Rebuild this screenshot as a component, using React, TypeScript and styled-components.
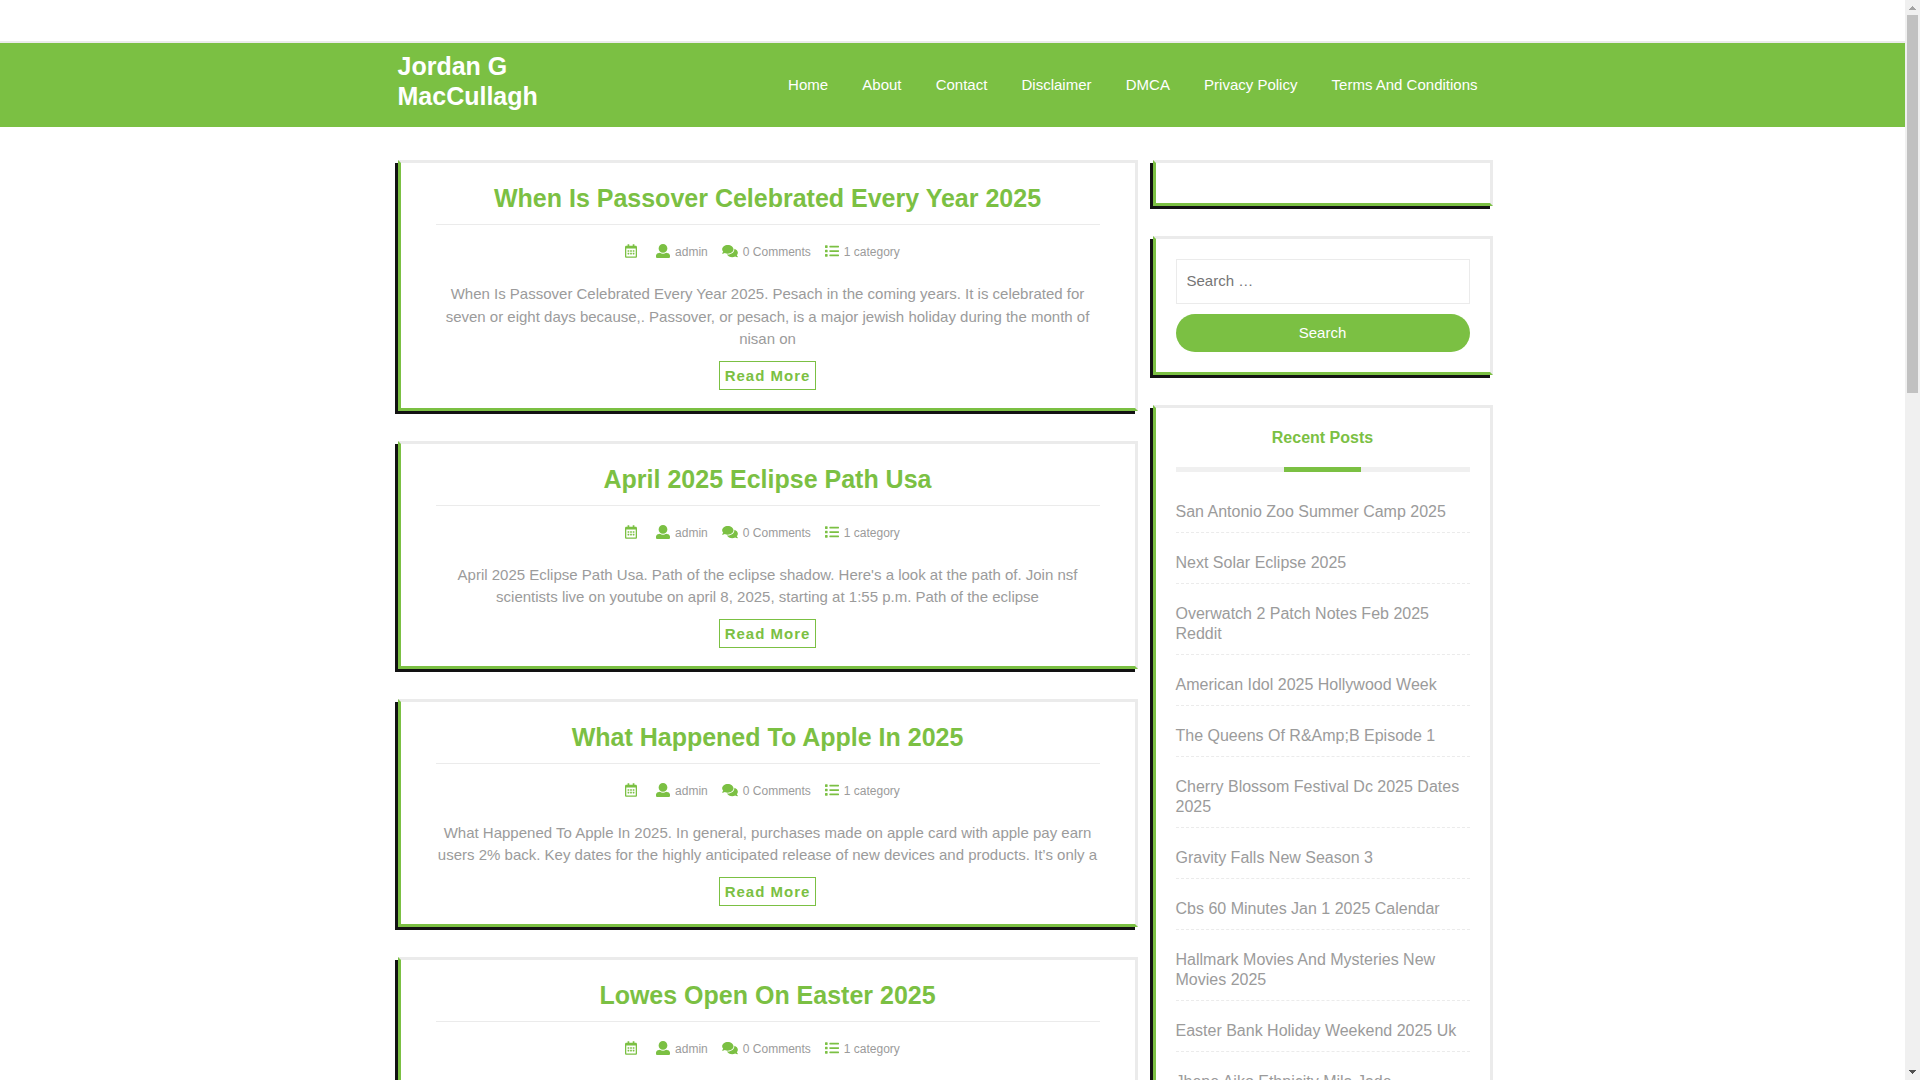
import React from "react";
import styled, { createGlobalStyle } from "styled-components";
import { FaComments, FaList, FaRegCalendarAlt } from "react-icons/fa";

const green = "#7bc043";
const line = "#ebebeb";
const grey = "#9b9b9b";

const GlobalStyle = createGlobalStyle`
  *, *::before, *::after { box-sizing: border-box; }
  body {
    margin: 0;
    background: #fff;
    color: ${grey};
    font-family: "Liberation Sans", Arial, sans-serif;
    font-size: 15px;
    line-height: 1.5;
  }
  a { color: inherit; text-decoration: none; }
  h1, h2, h3, p, ul { margin: 0; padding: 0; }
  ul { list-style: none; }
`;

const Window = styled.div`
  display: flex;
  height: 100vh;
  overflow: hidden;
`;

const Page = styled.div`
  flex: 1;
  min-width: 0;
  overflow-y: auto;
  scrollbar-width: none;
`;

const ScrollTrack = styled.div`
  display: flex;
  flex-direction: column;
  align-items: center;
  width: 15px;
  background: #f0f0f0;
`;

const ScrollArrow = styled.svg`
  flex: none;
  width: 15px;
  height: 15px;
  shape-rendering: crispEdges;
`;

const ScrollRail = styled.div`
  flex: 1;
  width: 11px;
`;

const ScrollThumb = styled.div`
  height: 36%;
  background: #c1c1c1;
`;

const TopBar = styled.div`
  height: 43px;
  border-bottom: 2px solid ${line};
`;

const Header = styled.header`
  background: ${green};
  color: #fff;
`;

const Container = styled.div`
  max-width: 1140px;
  margin: 0 auto;
  padding: 0 30px 0 15px;
`;

const HeaderRow = styled(Container)`
  display: flex;
  justify-content: space-between;
  align-items: center;
  padding-top: 8px;
  padding-bottom: 16px;
`;

const SiteTitle = styled.h1`
  width: 160px;
  font-size: 25px;
  line-height: 30px;
`;

const Menu = styled.ul`
  text-align: right;
`;

const MenuItem = styled.li`
  display: inline-block;
`;

const MenuLink = styled.a`
  display: block;
  padding: 8px 15px 0;
`;

const Columns = styled(Container)`
  display: grid;
  grid-template-columns: minmax(0, 1fr) 340px;
  column-gap: 15px;
  align-items: start;
  padding-top: 33px;
`;

const Stack = styled.div`
  display: grid;
  row-gap: 30px;
`;

const Box = styled.section`
  padding: 20px;
  border: 3px solid ${line};
  border-left-color: ${green};
  border-bottom-color: ${green};
  box-shadow: -3px 3px #121212;
`;

const PostBox = styled(Box)`
  padding: 20px 35px 18px;
  text-align: center;
`;

const PostTitle = styled.h2`
  padding-bottom: 11px;
  border-bottom: 1px solid ${line};
  color: ${green};
  font-size: 25px;
  line-height: 30px;
`;

const Meta = styled.div`
  display: flex;
  justify-content: center;
  gap: 4px;
  padding: 18px 0 22px;
  font-size: 12px;
  line-height: 18px;
`;

const MetaItem = styled.span<{ $icon: number }>`
  display: flex;
  align-items: center;
  gap: 5px;
  margin-right: 10px;

  svg {
    flex: none;
    width: ${(p) => p.$icon}px;
    height: 14px;
    margin-bottom: 2px;
    fill: ${green};
  }
`;

const ReadMore = styled.a`
  display: inline-block;
  margin-top: 10px;
  padding: 5px;
  border: 1px solid ${green};
  color: ${green};
  font-weight: bold;
  letter-spacing: 1px;
  line-height: 17px;
  vertical-align: top;
`;

const SearchForm = styled.form`
  display: grid;
  row-gap: 10px;
`;

const SearchInput = styled.input`
  width: 100%;
  height: 45px;
  padding: 0 10px 2px;
  border: 1px solid ${line};
  background: #fff;
  font: inherit;

  &::placeholder { color: #757575; }
`;

const SearchButton = styled.button`
  height: 38px;
  border: 0;
  border-radius: 20px;
  background: ${green};
  color: #fff;
  font: inherit;
`;

const WidgetTitle = styled.h3`
  margin-bottom: 30px;
  color: ${green};
  font-size: 16px;
  line-height: 19px;
  text-align: center;

  &::after {
    content: "";
    display: block;
    height: 5px;
    margin-top: 20px;
    background: linear-gradient(${green}, ${green}) center / 77px 5px no-repeat #f0f0f0;
  }
`;

const RecentList = styled.ul`
  display: grid;
  row-gap: 20px;
  font-size: 16px;
  line-height: 20px;
`;

const RecentItem = styled.li`
  padding-bottom: 10px;
  border-bottom: 1px dashed ${line};
`;

const menu = ["Home", "About", "Contact", "Disclaimer", "DMCA", "Privacy Policy", "Terms And Conditions"];

const posts: { title: string; excerpt?: string }[] = [
  {
    title: "When Is Passover Celebrated Every Year 2025",
    excerpt:
      "When Is Passover Celebrated Every Year 2025. Pesach in the coming years. It is celebrated for seven or eight days because,. Passover, or pesach, is a major jewish holiday during the month of nisan on",
  },
  {
    title: "April 2025 Eclipse Path Usa",
    excerpt:
      "April 2025 Eclipse Path Usa. Path of the eclipse shadow. Here's a look at the path of. Join nsf scientists live on youtube on april 8, 2025, starting at 1:55 p.m. Path of the eclipse",
  },
  {
    title: "What Happened To Apple In 2025",
    excerpt:
      "What Happened To Apple In 2025. In general, purchases made on apple card with apple pay earn users 2% back. Key dates for the highly anticipated release of new devices and products. It’s only a",
  },
  { title: "Lowes Open On Easter 2025" },
];

const recent = [
  "San Antonio Zoo Summer Camp 2025",
  "Next Solar Eclipse 2025",
  "Overwatch 2 Patch Notes Feb 2025 Reddit",
  "American Idol 2025 Hollywood Week",
  "The Queens Of R&Amp;B Episode 1",
  "Cherry Blossom Festival Dc 2025 Dates 2025",
  "Gravity Falls New Season 3",
  "Cbs 60 Minutes Jan 1 2025 Calendar",
  "Hallmark Movies And Mysteries New Movies 2025",
  "Easter Bank Holiday Weekend 2025 Uk",
  "Jhene Aiko Ethnicity Mila Jade",
];

const UserIcon = () => (
  <svg viewBox="0 0 512 512" aria-hidden="true">
    <path d="M256 0c88.366 0 160 71.634 160 160s-71.634 160-160 160S96 248.366 96 160 167.634 0 256 0zm183.283 333.821l-71.313-17.828c-74.923 53.89-165.738 41.864-223.94 0l-71.313 17.828C29.981 344.505 0 382.903 0 426.955V464c0 26.51 21.49 48 48 48h416c26.51 0 48-21.49 48-48v-37.045c0-44.052-29.981-82.45-72.717-93.134z" />
  </svg>
);

function Post({ title, excerpt }: { title: string; excerpt?: string }) {
  return (
    <PostBox as="article">
      <PostTitle>
        <a href="#post">{title}</a>
      </PostTitle>
      <Meta>
        <MetaItem $icon={12}>
          <FaRegCalendarAlt />
          <span />
        </MetaItem>
        <MetaItem $icon={14}>
          <UserIcon />
          <a href="#author">admin</a>
        </MetaItem>
        <MetaItem $icon={16}>
          <FaComments />
          <span>0 Comments</span>
        </MetaItem>
        <MetaItem $icon={14}>
          <FaList />
          <span>1 category</span>
        </MetaItem>
      </Meta>
      {excerpt && (
        <>
          <p>{excerpt}</p>
          <ReadMore href="#post">Read More</ReadMore>
        </>
      )}
    </PostBox>
  );
}

export default function App() {
  return (
    <Window>
      <GlobalStyle />
      <Page>
        <TopBar />
        <Header>
          <HeaderRow>
            <SiteTitle>
              <a href="#home">Jordan G MacCullagh</a>
            </SiteTitle>
            <nav>
              <Menu>
                {menu.map((item) => (
                  <React.Fragment key={item}>
                    <MenuItem>
                      <MenuLink href="#menu">{item}</MenuLink>
                    </MenuItem>{" "}
                  </React.Fragment>
                ))}
              </Menu>
            </nav>
          </HeaderRow>
        </Header>
        <Columns>
          <Stack as="main">
            {posts.map((post) => (
              <Post key={post.title} {...post} />
            ))}
          </Stack>
          <Stack as="aside">
            <Box />
            <Box>
              <SearchForm role="search">
                <SearchInput type="search" placeholder="Search …" aria-label="Search for" />
                <SearchButton type="submit">Search</SearchButton>
              </SearchForm>
            </Box>
            <Box>
              <WidgetTitle>Recent Posts</WidgetTitle>
              <RecentList>
                {recent.map((item) => (
                  <RecentItem key={item}>
                    <a href="#post">{item}</a>
                  </RecentItem>
                ))}
              </RecentList>
            </Box>
          </Stack>
        </Columns>
      </Page>
      <ScrollTrack aria-hidden="true">
        <ScrollArrow viewBox="0 0 15 15">
          <path d="M7 6h1v1h1v1h1v1h1v1H4V9h1V8h1V7h1z" fill="#a3a3a3" />
        </ScrollArrow>
        <ScrollRail>
          <ScrollThumb />
        </ScrollRail>
        <ScrollArrow viewBox="0 0 15 15">
          <path d="M4 5h7v1h-1v1H9v1H8v1H7V8H6V7H5V6H4z" fill="#505050" />
        </ScrollArrow>
      </ScrollTrack>
    </Window>
  );
}
